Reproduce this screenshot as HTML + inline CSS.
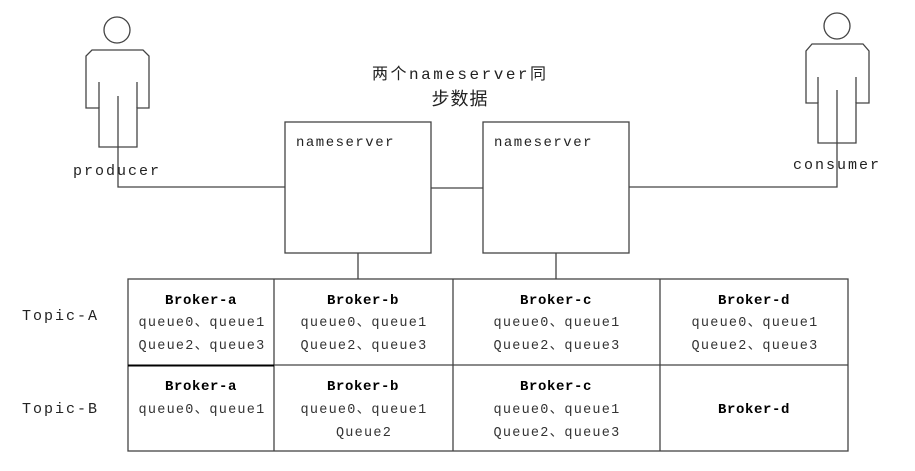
<!DOCTYPE html>
<html><head><meta charset="utf-8"><style>
html,body{margin:0;padding:0;background:#fff;}
svg{display:block;}
text{font-family:"Liberation Mono","Noto Sans CJK SC",monospace;fill:#222;}
.b{font-family:"Liberation Mono","Noto Sans CJK SC",monospace;font-weight:bold;font-size:14px;letter-spacing:0.6px;fill:#000;}
.q{font-size:13.5px;letter-spacing:1.25px;fill:#333;}
.l{font-size:15px;letter-spacing:2px;}
</style></head><body>
<svg width="915" height="471" viewBox="0 0 915 471" xmlns="http://www.w3.org/2000/svg">
<g fill="none" stroke="#444" stroke-width="1.3">
<circle cx="117" cy="30" r="13"/>
<path d="M92 50 L143 50 L149 56 L149 108 L137 108 L137 147 L99 147 L99 108 L86 108 L86 56 Z"/>
<path d="M99 82 V108 M137 82 V108 M118 96 V187 H285"/>
<circle cx="837" cy="26" r="13"/>
<path d="M812 44 L863 44 L869 51 L869 103 L856 103 L856 143 L818 143 L818 103 L806 103 L806 51 Z"/>
<path d="M818 77 V103 M856 77 V103 M837 90 V187 H629"/>
<rect x="285" y="122" width="146" height="131"/>
<rect x="483" y="122" width="146" height="131"/>
<path d="M431 188 H483 M358 253 V279 M556 253 V279"/>
<rect x="128" y="279" width="720" height="172"/>
<path d="M274 279 V451 M453 279 V451 M660 279 V451 M274 365 H848"/>
<path d="M128 365.5 H274" stroke="#000" stroke-width="2"/>
</g>
<text x="372" y="79" font-size="16" letter-spacing="2.5">两个nameserver同</text>
<text x="460" y="105" text-anchor="middle" font-size="18" letter-spacing="1">步数据</text>
<text x="296" y="146" font-size="14" letter-spacing="1.5">nameserver</text>
<text x="494" y="146" font-size="14" letter-spacing="1.5">nameserver</text>
<text class="l" x="73" y="175">producer</text>
<text class="l" x="793" y="169">consumer</text>
<text class="l" x="22" y="320">Topic-A</text>
<text class="l" x="22" y="413">Topic-B</text>
<g text-anchor="middle">
<text class="b" x="201" y="304">Broker-a</text>
<text class="q" x="202" y="326">queue0、queue1</text>
<text class="q" x="202" y="349">Queue2、queue3</text>
<text class="b" x="363" y="304">Broker-b</text>
<text class="q" x="364" y="326">queue0、queue1</text>
<text class="q" x="364" y="349">Queue2、queue3</text>
<text class="b" x="556" y="304">Broker-c</text>
<text class="q" x="557" y="326">queue0、queue1</text>
<text class="q" x="557" y="349">Queue2、queue3</text>
<text class="b" x="754" y="304">Broker-d</text>
<text class="q" x="755" y="326">queue0、queue1</text>
<text class="q" x="755" y="349">Queue2、queue3</text>
<text class="b" x="201" y="390">Broker-a</text>
<text class="q" x="202" y="413">queue0、queue1</text>
<text class="b" x="363" y="390">Broker-b</text>
<text class="q" x="364" y="413">queue0、queue1</text>
<text class="q" x="364" y="436">Queue2</text>
<text class="b" x="556" y="390">Broker-c</text>
<text class="q" x="557" y="413">queue0、queue1</text>
<text class="q" x="557" y="436">Queue2、queue3</text>
<text class="b" x="754" y="413">Broker-d</text>
</g>
</svg>
</body></html>
